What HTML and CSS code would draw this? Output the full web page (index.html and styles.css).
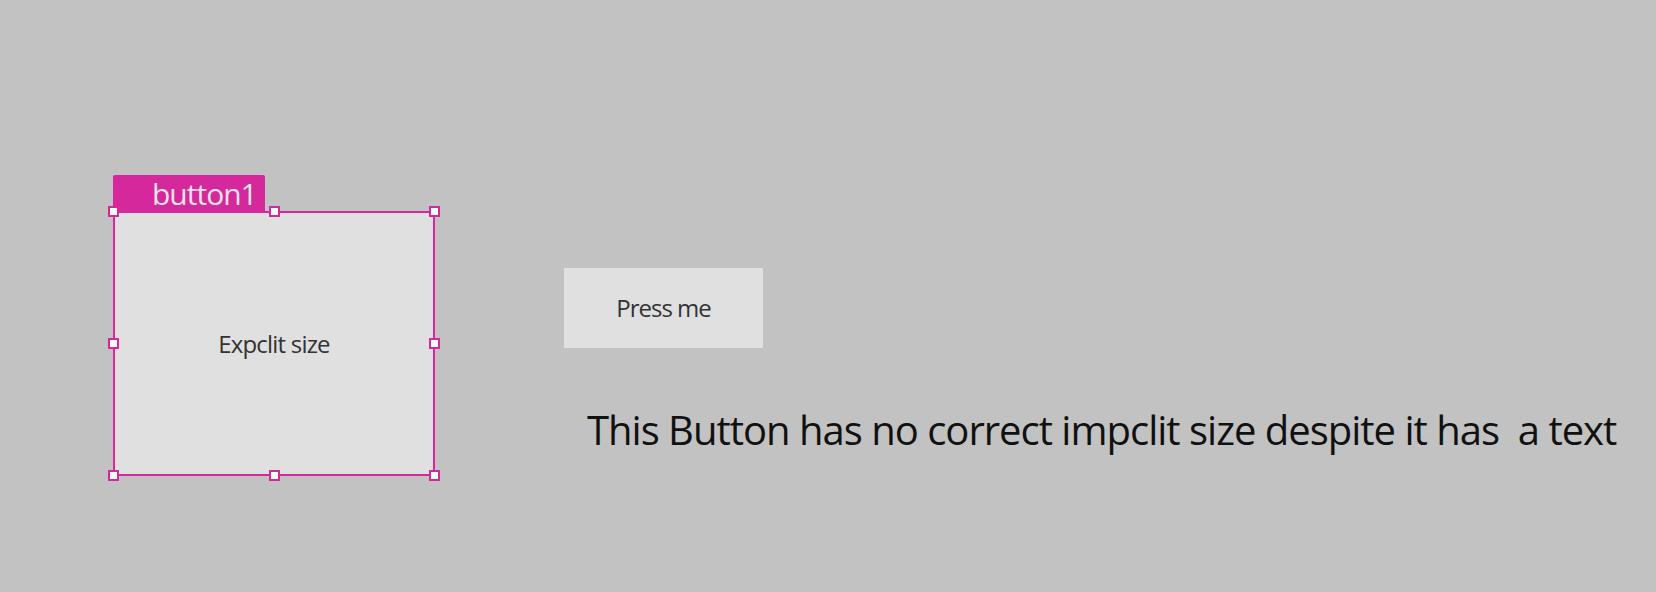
FILE: index.html
```html
<!DOCTYPE html>
<html>
<head>
<meta charset="utf-8">
<link rel="stylesheet" href="styles.css">
</head>
<body>
<div class="canvas">
  <div class="designer">
    <div class="tab">button1</div>
    <div class="btn-label">Expclit size</div>
    <span class="handle h-l h-t"></span>
    <span class="handle h-c h-t"></span>
    <span class="handle h-r h-t"></span>
    <span class="handle h-l h-m"></span>
    <span class="handle h-r h-m"></span>
    <span class="handle h-l h-b"></span>
    <span class="handle h-c h-b"></span>
    <span class="handle h-r h-b"></span>
  </div>
  <div class="right">
    <div class="press">Press me</div>
    <div class="note">This Button has no correct impclit size despite it has  a text</div>
  </div>
</div>
</body>
</html>
```
FILE: styles.css
```css
html, body {
  margin: 0;
  padding: 0;
  background: #c2c2c2;
}
body {
  width: 1656px;
  height: 592px;
  overflow: hidden;
  font-family: "Open Sans", "Noto Sans", sans-serif;
}
.canvas {
  display: flex;
  align-items: flex-start;
}
.designer {
  position: relative;
  flex-shrink: 0;
  box-sizing: border-box;
  margin-left: 113px;
  margin-top: 211px;
  width: 322px;
  height: 265px;
  border: 2px solid #d4289c;
  background: #e0e0e0;
  display: flex;
  align-items: center;
  justify-content: center;
}
.btn-label {
  font-size: 24px;
  line-height: 24px;
  letter-spacing: -0.8px;
  color: #333333;
  margin-top: 1px;
}
.tab {
  position: absolute;
  top: -38px;
  left: -2px;
  width: 152px;
  height: 37px;
  box-sizing: border-box;
  padding-left: 39px;
  padding-top: 4px;
  background: #d4289c;
  border-radius: 2px 2px 0 0;
  color: #e4e4e4;
  font-size: 30px;
  line-height: 30px;
  letter-spacing: -1px;
}
.handle {
  position: absolute;
  width: 11px;
  height: 11px;
  box-sizing: border-box;
  border: 2px solid #d4289c;
  background: #ffffff;
}
.h-l { left: -7px; }
.h-c { left: calc(50% - 5.5px); }
.h-r { right: -7px; }
.h-t { top: -7px; }
.h-m { top: calc(50% - 5.5px); }
.h-b { bottom: -7px; }
.right {
  flex-shrink: 0;
  margin-left: 129px;
  padding-top: 268px;
  display: flex;
  flex-direction: column;
  align-items: flex-start;
}
.press {
  width: 199px;
  height: 80px;
  background: #e0e0e0;
  color: #333333;
  font-size: 24px;
  line-height: 24px;
  letter-spacing: -1px;
  display: flex;
  align-items: center;
  justify-content: center;
}
.note {
  margin-top: 62px;
  margin-left: 23px;
  white-space: pre;
  color: #111111;
  font-size: 40px;
  line-height: 40px;
  letter-spacing: -1px;
}
```
